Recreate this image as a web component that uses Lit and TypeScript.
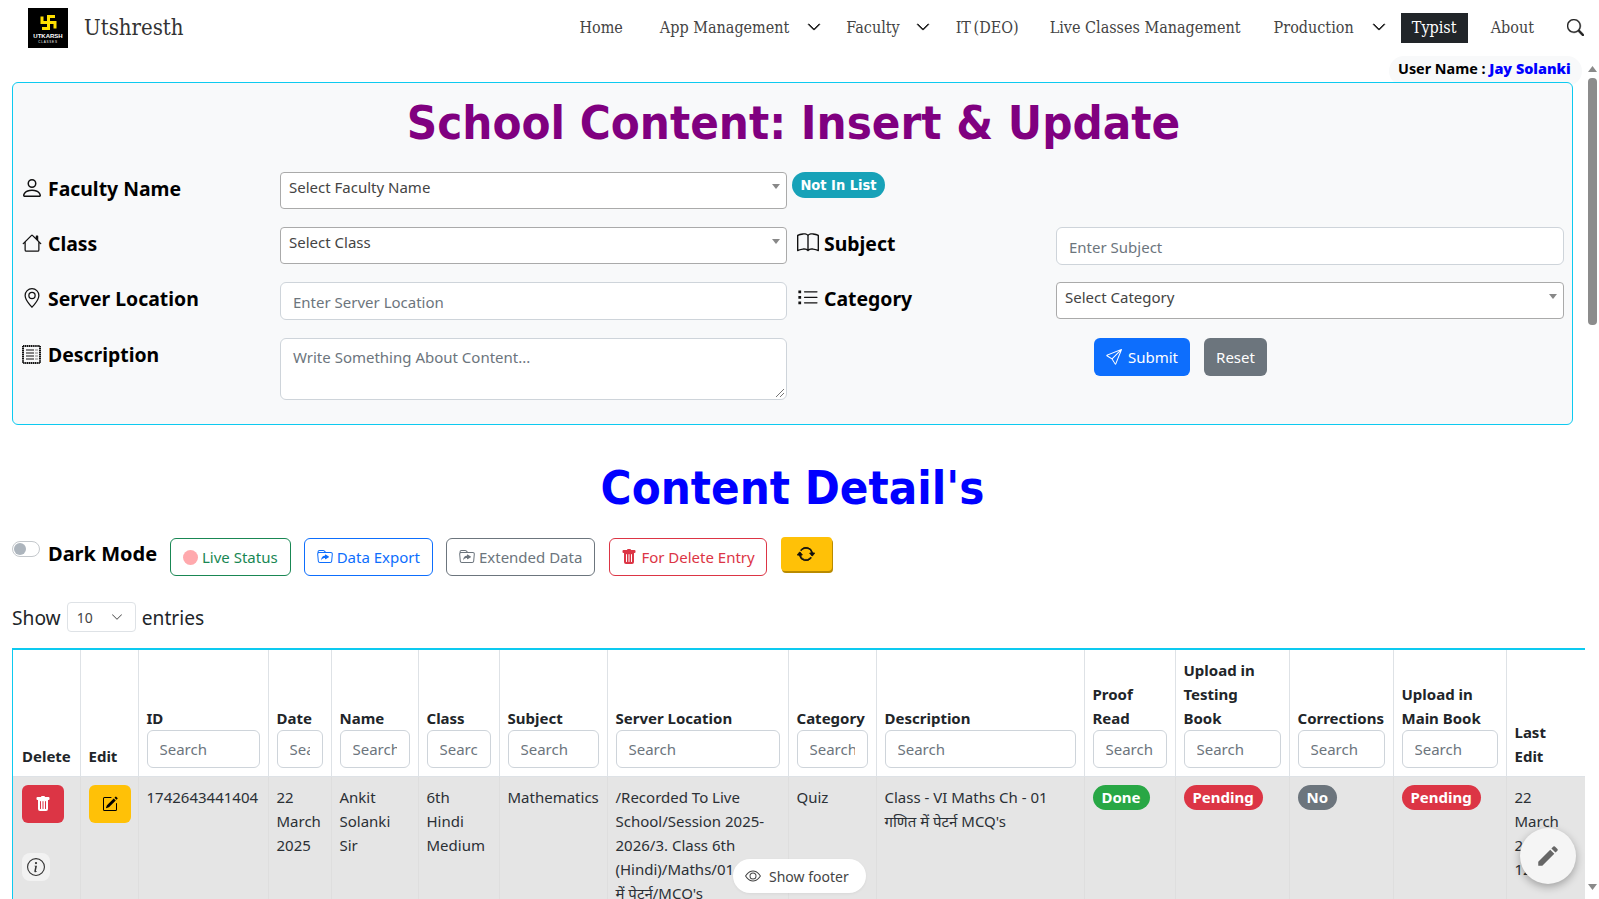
import { LitElement, html, css, svg } from 'lit';
import { customElement } from 'lit/decorators.js';

const ICONS: Record<string, string> = {
  person: 'M8 8a3 3 0 1 0 0-6 3 3 0 0 0 0 6m2-3a2 2 0 1 1-4 0 2 2 0 0 1 4 0m4 8c0 1-1 1-1 1H3s-1 0-1-1 1-4 6-4 6 3 6 4m-1-.004c-.001-.246-.154-.986-.832-1.664C11.516 10.68 10.289 10 8 10s-3.516.68-4.168 1.332c-.678.678-.83 1.418-.832 1.664z',
  house: 'M8.707 1.5a1 1 0 0 0-1.414 0L.646 8.146a.5.5 0 0 0 .708.708L2 8.207V13.5A1.5 1.5 0 0 0 3.5 15h9a1.5 1.5 0 0 0 1.5-1.5V8.207l.646.647a.5.5 0 0 0 .708-.708L13 5.793V2.5a.5.5 0 0 0-.5-.5h-1a.5.5 0 0 0-.5.5v1.293zM13 7.207V13.5a.5.5 0 0 1-.5.5h-9a.5.5 0 0 1-.5-.5V7.207l5-5z',
  geo: 'M12.166 8.94c-.524 1.062-1.234 2.12-1.96 3.07A32 32 0 0 1 8 14.58a32 32 0 0 1-2.206-2.57c-.726-.95-1.436-2.008-1.96-3.07C3.304 7.867 3 6.862 3 6a5 5 0 0 1 10 0c0 .862-.305 1.867-.834 2.94M8 16s6-5.686 6-10A6 6 0 0 0 2 6c0 4.314 6 10 6 10M8 8a2 2 0 1 1 0-4 2 2 0 0 1 0 4m0 1a3 3 0 1 0 0-6 3 3 0 0 0 0 6',
  book: 'M1 2.828c.885-.37 2.154-.769 3.388-.893 1.33-.134 2.458.063 3.112.752v9.746c-.935-.53-2.12-.603-3.213-.493-1.18.12-2.37.461-3.287.811zm7.5-.141c.654-.689 1.782-.886 3.112-.752 1.234.124 2.503.523 3.388.893v9.923c-.918-.35-2.107-.692-3.287-.81-1.094-.111-2.278-.039-3.213.492zM8 1.783C7.015.936 5.587.81 4.287.94c-1.514.153-3.042.672-3.994 1.105A.5.5 0 0 0 0 2.5v11a.5.5 0 0 0 .707.455c.882-.4 2.303-.881 3.68-1.02 1.409-.142 2.59.087 3.223.877a.5.5 0 0 0 .78 0c.633-.79 1.814-1.019 3.222-.877 1.378.139 2.8.62 3.681 1.02A.5.5 0 0 0 16 13.5v-11a.5.5 0 0 0-.293-.455c-.952-.433-2.48-.952-3.994-1.105C10.413.809 8.985.936 8 1.783',
  list: 'M5 11.5a.5.5 0 0 1 .5-.5h9a.5.5 0 0 1 0 1h-9a.5.5 0 0 1-.5-.5m0-4a.5.5 0 0 1 .5-.5h9a.5.5 0 0 1 0 1h-9a.5.5 0 0 1-.5-.5m0-4a.5.5 0 0 1 .5-.5h9a.5.5 0 0 1 0 1h-9a.5.5 0 0 1-.5-.5M1 2.5h2v2H1zm0 4h2v2H1zm0 4h2v2H1z',
  send: 'M15.854.146a.5.5 0 0 1 .11.54l-5.819 14.547a.75.75 0 0 1-1.329.124l-3.178-4.995L.643 7.184a.75.75 0 0 1 .124-1.33L15.314.037a.5.5 0 0 1 .54.11ZM6.636 10.07l2.761 4.338L14.13 2.576zm6.787-8.201L1.591 6.602l4.339 2.76z',
  trash: 'M2.5 1a1 1 0 0 0-1 1v1a1 1 0 0 0 1 1H3v9a2 2 0 0 0 2 2h6a2 2 0 0 0 2-2V4h.5a1 1 0 0 0 1-1V2a1 1 0 0 0-1-1H10a1 1 0 0 0-1-1H7a1 1 0 0 0-1 1zm3 4a.5.5 0 0 1 .5.5v7a.5.5 0 0 1-1 0v-7a.5.5 0 0 1 .5-.5M8 5a.5.5 0 0 1 .5.5v7a.5.5 0 0 1-1 0v-7A.5.5 0 0 1 8 5m3 .5v7a.5.5 0 0 1-1 0v-7a.5.5 0 0 1 1 0',
  edit: 'M15.502 1.94a.5.5 0 0 1 0 .706L14.459 3.69l-2-2L13.502.646a.5.5 0 0 1 .707 0l1.293 1.293zm-1.75 2.456-2-2L4.939 9.21a.5.5 0 0 0-.121.196l-.805 2.414a.25.25 0 0 0 .316.316l2.414-.805a.5.5 0 0 0 .196-.12l6.813-6.814zM1 13.5A1.5 1.5 0 0 0 2.5 15h11a1.5 1.5 0 0 0 1.5-1.5v-6a.5.5 0 0 0-1 0v6a.5.5 0 0 1-.5.5h-11a.5.5 0 0 1-.5-.5v-11a.5.5 0 0 1 .5-.5H9a.5.5 0 0 0 0-1H2.5A1.5 1.5 0 0 0 1 2.5z',
  info: 'M8 15A7 7 0 1 1 8 1a7 7 0 0 1 0 14m0 1A8 8 0 1 0 8 0a8 8 0 0 0 0 16m.93-9.412-1 4.705c-.07.34.029.533.304.533.194 0 .487-.07.686-.246l-.088.416c-.287.346-.92.598-1.465.598-.703 0-1.002-.422-.808-1.319l.738-3.468c.064-.293.006-.399-.287-.47l-.451-.081.082-.381 2.29-.287zM8 5.5a1 1 0 1 1 0-2 1 1 0 0 1 0 2',
  eye: 'M16 8s-3-5.5-8-5.5S0 8 0 8s3 5.5 8 5.5S16 8 16 8M1.173 8a13 13 0 0 1 1.66-2.043C4.12 4.668 5.88 3.5 8 3.5s3.879 1.168 5.168 2.457A13 13 0 0 1 14.828 8q-.086.13-.195.288c-.335.48-.83 1.12-1.465 1.755C11.879 11.332 10.119 12.5 8 12.5s-3.879-1.168-5.168-2.457A13 13 0 0 1 1.172 8zM8 5.5a2.5 2.5 0 1 0 0 5 2.5 2.5 0 0 0 0-5M4.5 8a3.5 3.5 0 1 1 7 0 3.5 3.5 0 0 1-7 0',
  search: 'M11.742 10.344a6.5 6.5 0 1 0-1.397 1.398h-.001q.044.06.098.115l3.85 3.85a1 1 0 0 0 1.415-1.414l-3.85-3.85a1 1 0 0 0-.115-.1zM12 6.5a5.5 5.5 0 1 1-11 0 5.5 5.5 0 0 1 11 0',
  folder: 'm11.798 8.271-3.182 1.97c-.27.166-.616-.036-.616-.372V9.1s-2.571-.3-4 2.4c.571-4.8 3.143-4.8 4-4.8v-.769c0-.336.346-.538.616-.371l3.182 1.97c.27.166.27.576 0 .742M.54 3.87.5 3a2 2 0 0 1 2-2h3.672a2 2 0 0 1 1.414.586l.828.828A2 2 0 0 0 9.828 3h3.982a2 2 0 0 1 1.992 2.181l-.637 7A2 2 0 0 1 13.174 14H2.826a2 2 0 0 1-1.991-1.819l-.637-7a2 2 0 0 1 .342-1.31zM2.19 4a1 1 0 0 0-.996 1.09l.637 7a1 1 0 0 0 .995.91h10.348a1 1 0 0 0 .995-.91l.637-7A1 1 0 0 0 13.81 4zm4.69-1.707A1 1 0 0 0 6.172 2H2.5a1 1 0 0 0-1 .981l.006.139q.323-.119.684-.12h5.396z',
  repeat: 'M11.534 7h3.932a.25.25 0 0 1 .192.41l-1.966 2.36a.25.25 0 0 1-.384 0l-1.966-2.36a.25.25 0 0 1 .192-.41m-11 2h3.932a.25.25 0 0 0 .192-.41L2.692 6.23a.25.25 0 0 0-.384 0L.342 8.59A.25.25 0 0 0 .534 9M8 3c-1.552 0-2.94.707-3.857 1.818a.5.5 0 1 1-.771-.636A6.002 6.002 0 0 1 13.917 7H12.9A5 5 0 0 0 8 3M3.1 9a5.002 5.002 0 0 0 8.757 2.182.5.5 0 1 1 .771.636A6.002 6.002 0 0 1 2.083 9z',
  chevron: 'M1.646 4.646a.5.5 0 0 1 .708 0L8 10.293l5.646-5.647a.5.5 0 0 1 .708.708l-6 6a.5.5 0 0 1-.708 0l-6-6a.5.5 0 0 1 0-.708',
  pencil: 'M3 17.25V21h3.75L17.81 9.94l-3.75-3.75zM20.71 7.04a1 1 0 0 0 0-1.41l-2.34-2.34a1 1 0 0 0-1.41 0l-1.83 1.83 3.75 3.75z',
};

const icon = (name: string, size = 16, box = 16) => html`<svg class="bi" width=${size} height=${size} viewBox="0 0 ${box} ${box}" fill="currentColor">${svg`<path d=${ICONS[name]} fill-rule="evenodd"></path>`}</svg>`;

const docIcon = html`<svg class="bi" width="19" height="19" viewBox="0 0 19 19" fill="none" stroke="currentColor">
  <rect x="1" y="1" width="17" height="17" stroke-width="2" stroke-dasharray="1.4 .5"></rect>
  <path d="M4 5h8M4 8h8M4 11h8M4 14h8" stroke-width="1.2"></path>
  <path d="M13.5 5h2M13.5 8h2M13.5 11h2M13.5 14h2" stroke-width="1.2" stroke-dasharray="1 .5"></path>
</svg>`;

type Col = { w: number; label: string[]; search?: boolean };

const COLS: Col[] = [
  { w: 67, label: ['Delete'] },
  { w: 58, label: ['Edit'] },
  { w: 130, label: ['ID'], search: true },
  { w: 63, label: ['Date'], search: true },
  { w: 87, label: ['Name'], search: true },
  { w: 81, label: ['Class'], search: true },
  { w: 108, label: ['Subject'], search: true },
  { w: 181, label: ['Server Location'], search: true },
  { w: 88, label: ['Category'], search: true },
  { w: 208, label: ['Description'], search: true },
  { w: 91, label: ['Proof', 'Read'], search: true },
  { w: 114, label: ['Upload in', 'Testing', 'Book'], search: true },
  { w: 104, label: ['Corrections'], search: true },
  { w: 113, label: ['Upload in', 'Main Book'], search: true },
  { w: 79, label: ['Last', 'Edit'] },
];

@customElement('app-root')
export class AppRoot extends LitElement {
  static override styles = css`
    :host {
      display: flex;
      height: 899px;
      overflow: hidden;
      background: #fff;
      font-family: "Noto Sans", sans-serif;
      font-size: 15px;
      color: #212529;
    }
    * { box-sizing: border-box; }
    .bi { display: block; flex: none; }
    .page { flex: 1; min-width: 0; position: relative; overflow: hidden; }

    .scrollbar { width: 14px; background: #fff; display: flex; flex-direction: column; align-items: center; flex: none; }
    .arrow { height: 15px; display: flex; align-items: center; justify-content: center; color: #8a8a8a; flex: none; }
    .arrow.top { margin-top: 61px; }
    .arrow.bottom { margin-bottom: 5px; }
    .thumb { width: 9px; height: 247px; background: #8c8c8c; border-radius: 4px; margin-top: 2px; }
    .track { flex: 1; }

    nav { height: 56px; display: flex; align-items: flex-start; font-family: "DejaVu Serif Condensed", "DejaVu Serif", serif; color: #444; font-size: 16px; }
    .logo { width: 40px; height: 40px; margin: 8px 0 0 28px; flex: none; background: #000; display: block; }
    .logo text { font-family: "Liberation Sans", sans-serif; fill: #fff; text-anchor: middle; }
    .brand { font-size: 22px; margin: 12px auto 0 16px; color: #333; line-height: 32px; }
    .links { display: flex; align-items: center; height: 30px; margin-top: 12px; }
    .link { margin-right: 33px; white-space: nowrap; }
    .link.home { margin-right: 37px; }
    .link.drop { margin-right: 18px; }
    .link.drop.fac { margin-right: 16px; }
    .link.it { word-spacing: -2px; margin-right: 31px; }
    .chev { margin-right: 25px; color: #222; stroke: #222; stroke-width: 1; }
    .chev.fac { margin-right: 26px; }
    .chev.last { margin-right: 15px; }
    .link.active { background: #212529; color: #fff; width: 67px; text-align: center; height: 30px; line-height: 30px; margin: 1px 23px 0 0; }
    .link.about { margin-right: 33px; }
    .find { color: #222; stroke: #222; stroke-width: .4; margin-right: 1px; }

    .user { position: absolute; top: 56px; right: 3px; width: 193px; height: 30px; background: #f8f9fa; border-radius: 15px; padding: 3px 0 0 9px; font-size: 14.4px; font-weight: 700; color: #000; white-space: nowrap; }
    .user b { color: #00f; }

    .panel { position: relative; margin: 26px 12px 0 12px; height: 343px; background: #f8f9fa; border: 1px solid #0dcaf0; border-radius: 6px; padding: 0 8px 0 10px; }
    .heading { margin: 0; text-align: center; font-family: "Comic Sans MS", "DejaVu Sans Condensed", "DejaVu Sans", sans-serif; font-weight: 700; }
    .panel .heading { color: #800080; font-size: 47px; line-height: 80px; height: 89px; }
    .form { display: grid; grid-template-columns: 257px 507px 269px 508px; }
    .lbl { display: flex; align-items: center; align-self: start; gap: 7px; font-size: 19.4px; font-weight: 700; color: #000; height: 30px; margin-top: 1px; white-space: nowrap; }
    .slot { width: 19px; height: 30px; margin-left: -1px; display: flex; align-items: center; justify-content: center; flex: none; color: #111; }
    .lbl.right { padding-left: 10px; gap: 5px; }
    .lbl.right .slot { width: 22px; margin-left: 0; }
    .field { height: 55px; }
    .field.mid { height: 56px; }
    .field.tall { height: 80px; }
    .select2 { height: 37px; background: #fff; border: 1px solid #aaa; border-radius: 4px; padding-left: 8px; line-height: 28px; color: #444; position: relative; }
    .select2::after { content: ""; position: absolute; right: 6px; top: 11px; border: 4px solid transparent; border-top: 5px solid #888; border-bottom: 0; }
    .input { height: 38px; background: #fff; border: 1px solid #ced4da; border-radius: 6px; padding: 0 12px; color: #6c757d; line-height: 38px; white-space: nowrap; overflow: hidden; }
    .area { height: 62px; line-height: 36px; position: relative; }
    .grip { position: absolute; right: 1px; bottom: 1px; display: block; }
    .notin { display: inline-block; margin-left: 5px; height: 26px; width: 93px; text-align: center; line-height: 26px; background: #17a2b8; color: #fff; border-radius: 13px; font-size: 14.5px; font-weight: 700; font-family: "Comic Sans MS", "DejaVu Sans Condensed", sans-serif; }
    .actions { display: flex; gap: 14px; padding-left: 38px; }
    .btn { display: inline-flex; align-items: center; justify-content: center; gap: 6px; height: 38px; border-radius: 6px; color: #fff; white-space: nowrap; }
    .submit { background: #0d6efd; width: 96px; }
    .reset { background: #6c757d; width: 63px; }

    .panel2 { color: #00f; font-size: 47px; line-height: 74px; margin-top: 26px; height: 87px; }
    .tools { display: flex; align-items: flex-start; margin-left: 12px; height: 64px; }
    .switch { width: 28px; height: 16px; margin-top: 3px; border: 1px solid #c4c8cc; border-radius: 8px; background: #fff; flex: none; padding: 1px; }
    .switch i { display: block; width: 12px; height: 12px; border-radius: 50%; background: #adb5bd; }
    .dark { font-size: 20px; font-weight: 700; color: #000; margin: 0 13px 0 8px; line-height: 32px; width: 109px; white-space: nowrap; }
    .tool { height: 38px; display: inline-flex; align-items: center; gap: 4px; border: 1px solid; border-radius: 6px; background: #fff; margin-right: 13px; padding: 0 12px; white-space: nowrap; }
    .green { color: #198754; border-color: #198754; }
    .blue { color: #0d6efd; border-color: #0d6efd; }
    .grey { color: #6c757d; border-color: #6c757d; margin-right: 14px; }
    .red { color: #dc3545; border-color: #dc3545; padding: 0 11px; margin-right: 14px; }
    .dot { width: 15px; height: 15px; border-radius: 50%; background: #ffa9ad; }
    .refresh { width: 51px; height: 34px; margin-top: -1px; background: #ffc107; border-radius: 4px; box-shadow: 1px 2px 0 #b98b00; display: flex; align-items: center; justify-content: center; color: #111; stroke: #111; stroke-width: .7; }

    .show { display: flex; align-items: center; height: 30px; margin-left: 12px; gap: 6px; font-size: 19.2px; color: #212529; }
    .len { width: 69px; height: 30px; border: 1px solid #dee2e6; border-radius: 4px; display: flex; align-items: center; justify-content: space-between; padding: 0 12px 0 9px; font-size: 14px; color: #444; }

    .tablewrap { margin: 16px 0 0 12px; border-top: 2px solid #0dcaf0; border-left: 1px solid #0dcaf0; width: 1573px; overflow: hidden; height: 260px; }
    table { border-collapse: collapse; table-layout: fixed; width: 1572px; }
    th, td { border-right: 1px solid #dee2e6; padding: 8px; text-align: left; line-height: 24px; font-size: 15px; }
    th:first-child, td:first-child { padding-left: 9px; }
    th { vertical-align: bottom; font-weight: 700; color: #212529; border-bottom: 1px solid #dee2e6; }
    td { vertical-align: top; background: #e5e5e5; color: #2b3035; border-right-color: #dedede; }
    .colsearch { height: 38px; border: 1px solid #ced4da; border-radius: 6px; padding: 0 12px; font-weight: 400; color: #6c757d; line-height: 36px; white-space: nowrap; background: #fff; }
    .colsearch span { display: block; overflow: hidden; }
    .act { width: 42px; height: 38px; border-radius: 6px; display: flex; align-items: center; justify-content: center; }
    .act.del { background: #dc3545; color: #fff; }
    .act.ed { background: #ffc107; color: #000; }
    .infob { width: 28px; height: 28px; margin-top: 30px; border-radius: 8px; background: #f2f2f2; display: flex; align-items: center; justify-content: center; color: #333; }
    .pill { display: inline-block; height: 25px; line-height: 25px; padding: 0 9px; border-radius: 13px; color: #fff; font-weight: 700; }
    .ok { background: #28a745; }
    .bad { background: #dc3545; }
    .no { background: #6c757d; }

    .footer-toggle { position: absolute; left: 733px; top: 859px; width: 133px; height: 34px; border-radius: 17px; background: #fff; display: flex; align-items: center; gap: 8px; padding-left: 12px; font-size: 14px; color: #444; box-shadow: 0 1px 3px rgba(0,0,0,.06); }
    .fab { position: absolute; left: 1520px; top: 828px; width: 56px; height: 56px; border-radius: 50%; background: #f5f5f5; box-shadow: 0 3px 8px rgba(0,0,0,.3); display: flex; align-items: center; justify-content: center; color: #666; }
  `;

  private renderRow() {
    return html`<tr>
      <td>
        <div class="act del">${icon('trash')}</div>
        <div class="infob">${icon('info', 18)}</div>
      </td>
      <td><div class="act ed">${icon('edit')}</div></td>
      <td>1742643441404</td>
      <td>22 March 2025</td>
      <td>Ankit Solanki Sir</td>
      <td>6th<br />Hindi<br />Medium</td>
      <td>Mathematics</td>
      <td>/Recorded To Live School/Session 2025-2026/3. Class 6th (Hindi)/Maths/01 गणित<br />में पेटर्न/MCQ's</td>
      <td>Quiz</td>
      <td>Class - VI Maths Ch - 01 गणित में पेटर्न MCQ's</td>
      <td><span class="pill ok">Done</span></td>
      <td><span class="pill bad">Pending</span></td>
      <td><span class="pill no">No</span></td>
      <td><span class="pill bad">Pending</span></td>
      <td>22 March 2025 12:30</td>
    </tr>`;
  }

  override render() {
    return html`
      <div class="page">
        <nav>
          <svg class="logo" viewBox="0 0 40 40">
            <path d="M27 8.5h-6.5v12H14M14 8.5v6h13v6" fill="none" stroke="#ffdf00" stroke-width="3"></path>
            <text x="20" y="30" font-size="6" font-weight="700">UTKARSH</text>
            <text x="20" y="34.5" font-size="3" letter-spacing=".8">CLASSES</text>
          </svg>
          <div class="brand">Utshresth</div>
          <div class="links">
            <span class="link home">Home</span>
            <span class="link drop">App Management</span><span class="chev">${icon('chevron', 14)}</span>
            <span class="link drop fac">Faculty</span><span class="chev fac">${icon('chevron', 14)}</span>
            <span class="link it">IT (DEO)</span>
            <span class="link">Live Classes Management</span>
            <span class="link drop">Production</span><span class="chev last">${icon('chevron', 14)}</span>
            <span class="link active">Typist</span>
            <span class="link about">About</span>
            <span class="find">${icon('search', 17)}</span>
          </div>
        </nav>
        <div class="user">User Name : <b>Jay Solanki</b></div>

        <section class="panel">
          <h1 class="heading">School Content: Insert &amp; Update</h1>
          <div class="form">
            <div class="lbl"><span class="slot">${icon('person', 24)}</span>Faculty Name</div>
            <div class="field"><div class="select2">Select Faculty Name</div></div>
            <div class="field"><span class="notin">Not In List</span></div>
            <div></div>

            <div class="lbl"><span class="slot">${icon('house', 20)}</span>Class</div>
            <div class="field"><div class="select2">Select Class</div></div>
            <div class="lbl right"><span class="slot">${icon('book', 22)}</span>Subject</div>
            <div class="field"><div class="input">Enter Subject</div></div>

            <div class="lbl"><span class="slot">${icon('geo', 20)}</span>Server Location</div>
            <div class="field mid"><div class="input">Enter Server Location</div></div>
            <div class="lbl right"><span class="slot">${icon('list', 22)}</span>Category</div>
            <div class="field mid"><div class="select2">Select Category</div></div>

            <div class="lbl"><span class="slot">${docIcon}</span>Description</div>
            <div class="field tall"><div class="input area">Write Something About Content...
              <svg class="grip" width="10" height="10" viewBox="0 0 10 10" stroke="#777" fill="none"><path d="M9 1 1 9M9 5 5 9"></path></svg>
            </div></div>
            <div></div>
            <div class="actions">
              <span class="btn submit">${icon('send')}Submit</span>
              <span class="btn reset">Reset</span>
            </div>
          </div>
        </section>

        <h1 class="heading panel2">Content Detail's</h1>

        <div class="tools">
          <div class="switch"><i></i></div>
          <div class="dark">Dark Mode</div>
          <span class="tool green"><i class="dot"></i>Live Status</span>
          <span class="tool blue">${icon('folder')}Data Export</span>
          <span class="tool grey">${icon('folder')}Extended Data</span>
          <span class="tool red">${icon('trash')}For Delete Entry</span>
          <span class="refresh">${icon('repeat', 18)}</span>
        </div>

        <div class="show">Show <span class="len">10 ${icon('chevron', 12)}</span> entries</div>

        <div class="tablewrap">
          <table>
            <colgroup>${COLS.map((c) => html`<col style="width:${c.w}px" />`)}</colgroup>
            <thead>
              <tr>
                ${COLS.map(
                  (c) => html`<th>
                    ${c.label.map((l) => html`<div>${l}</div>`)}
                    ${c.search ? html`<div class="colsearch"><span>Search</span></div>` : ''}
                  </th>`,
                )}
              </tr>
            </thead>
            <tbody>${this.renderRow()}</tbody>
          </table>
        </div>

        <div class="footer-toggle">${icon('eye')}Show footer</div>
        <div class="fab">${icon('pencil', 26, 24)}</div>
      </div>
      <div class="scrollbar">
        <div class="arrow top"><svg width="9" height="6"><path d="M4.5 0 9 6H0z" fill="currentColor"></path></svg></div>
        <div class="thumb"></div>
        <div class="track"></div>
        <div class="arrow bottom"><svg width="9" height="6"><path d="M0 0h9L4.5 6z" fill="currentColor"></path></svg></div>
      </div>
    `;
  }
}

declare global {
  interface HTMLElementTagNameMap {
    'app-root': AppRoot;
  }
}
